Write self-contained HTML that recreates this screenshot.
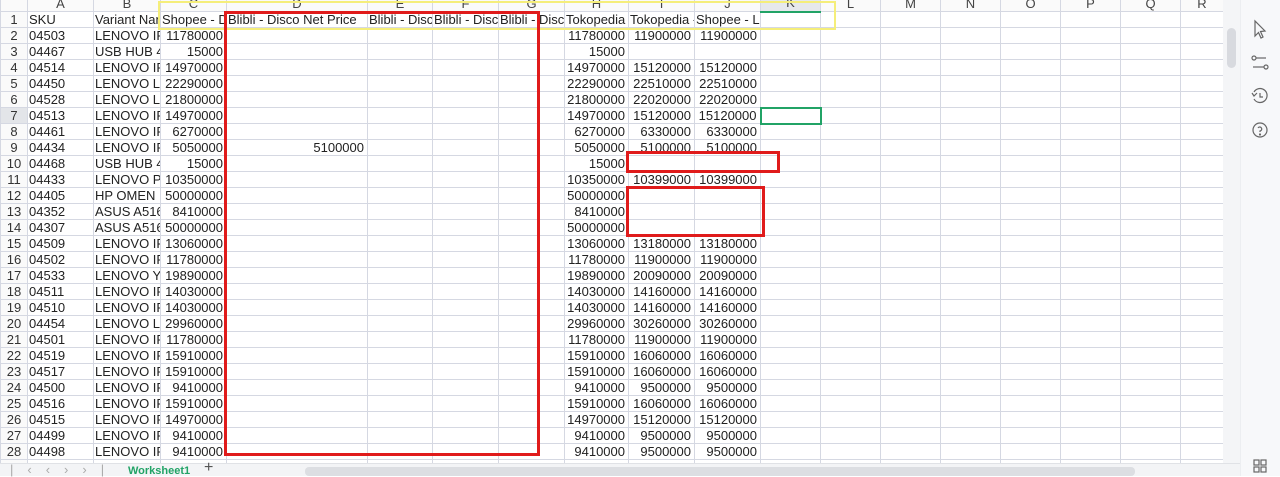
<!DOCTYPE html>
<html><head><meta charset="utf-8"><style>
*{margin:0;padding:0;box-sizing:border-box}
body{width:1280px;height:476px;overflow:hidden;background:#fff;font-family:"Liberation Sans",Arial,sans-serif;font-size:13px;color:#222;position:relative}
table{position:absolute;left:0;top:-5px;width:1223px;border-collapse:collapse;table-layout:fixed}
td{height:16px;border:1px solid #d5d8e2;white-space:nowrap;overflow:hidden;padding:0 1px;line-height:14px;font-size:13px}
td.n{text-align:right;padding-right:3px}
td.rh{text-align:center;color:#333;background:#fafafa}
tr.hd td{background:#fafafa;text-align:center;color:#444}
.box{position:absolute;border:3px solid #e01b1b}
</style></head><body>
<table>
<colgroup><col style="width:27px"><col style="width:66px"><col style="width:67px"><col style="width:66px"><col style="width:141px"><col style="width:65px"><col style="width:66px"><col style="width:66px"><col style="width:64px"><col style="width:66px"><col style="width:66px"><col style="width:60px"><col style="width:60px"><col style="width:60px"><col style="width:60px"><col style="width:60px"><col style="width:60px"><col style="width:60px"><col style="width:43px"></colgroup>
<tr class="hd"><td></td><td>A</td><td>B</td><td>C</td><td>D</td><td>E</td><td>F</td><td>G</td><td>H</td><td>I</td><td>J</td><td style="background:#e6e8ec;border-bottom:2px solid #21a366">K</td><td>L</td><td>M</td><td>N</td><td>O</td><td>P</td><td>Q</td><td>R</td></tr>
<tr><td class="rh">1</td><td>SKU</td><td>Variant Name</td><td>Shopee - Disc</td><td>Blibli - Disco Net Price</td><td>Blibli - Disc</td><td>Blibli - Disc</td><td>Blibli - Disc</td><td>Tokopedia - </td><td>Tokopedia - </td><td>Shopee - Lenovo Price</td><td></td><td></td><td></td><td></td><td></td><td></td><td></td><td></td></tr>
<tr><td class="rh">2</td><td>04503</td><td>LENOVO IF</td><td class="n">11780000</td><td></td><td></td><td></td><td></td><td class="n">11780000</td><td class="n">11900000</td><td class="n">11900000</td><td></td><td></td><td></td><td></td><td></td><td></td><td></td><td></td></tr>
<tr><td class="rh">3</td><td>04467</td><td>USB HUB 4</td><td class="n">15000</td><td></td><td></td><td></td><td></td><td class="n">15000</td><td></td><td></td><td></td><td></td><td></td><td></td><td></td><td></td><td></td><td></td></tr>
<tr><td class="rh">4</td><td>04514</td><td>LENOVO IF</td><td class="n">14970000</td><td></td><td></td><td></td><td></td><td class="n">14970000</td><td class="n">15120000</td><td class="n">15120000</td><td></td><td></td><td></td><td></td><td></td><td></td><td></td><td></td></tr>
<tr><td class="rh">5</td><td>04450</td><td>LENOVO LI</td><td class="n">22290000</td><td></td><td></td><td></td><td></td><td class="n">22290000</td><td class="n">22510000</td><td class="n">22510000</td><td></td><td></td><td></td><td></td><td></td><td></td><td></td><td></td></tr>
<tr><td class="rh">6</td><td>04528</td><td>LENOVO LI</td><td class="n">21800000</td><td></td><td></td><td></td><td></td><td class="n">21800000</td><td class="n">22020000</td><td class="n">22020000</td><td></td><td></td><td></td><td></td><td></td><td></td><td></td><td></td></tr>
<tr><td class="rh" style="background:#e3e5e9">7</td><td>04513</td><td>LENOVO IF</td><td class="n">14970000</td><td></td><td></td><td></td><td></td><td class="n">14970000</td><td class="n">15120000</td><td class="n">15120000</td><td style="border:2px solid #21a366"></td><td></td><td></td><td></td><td></td><td></td><td></td><td></td></tr>
<tr><td class="rh">8</td><td>04461</td><td>LENOVO IF</td><td class="n">6270000</td><td></td><td></td><td></td><td></td><td class="n">6270000</td><td class="n">6330000</td><td class="n">6330000</td><td></td><td></td><td></td><td></td><td></td><td></td><td></td><td></td></tr>
<tr><td class="rh">9</td><td>04434</td><td>LENOVO IF</td><td class="n">5050000</td><td class="n">5100000</td><td></td><td></td><td></td><td class="n">5050000</td><td class="n">5100000</td><td class="n">5100000</td><td></td><td></td><td></td><td></td><td></td><td></td><td></td><td></td></tr>
<tr><td class="rh">10</td><td>04468</td><td>USB HUB 4</td><td class="n">15000</td><td></td><td></td><td></td><td></td><td class="n">15000</td><td></td><td></td><td></td><td></td><td></td><td></td><td></td><td></td><td></td><td></td></tr>
<tr><td class="rh">11</td><td>04433</td><td>LENOVO P</td><td class="n">10350000</td><td></td><td></td><td></td><td></td><td class="n">10350000</td><td class="n">10399000</td><td class="n">10399000</td><td></td><td></td><td></td><td></td><td></td><td></td><td></td><td></td></tr>
<tr><td class="rh">12</td><td>04405</td><td>HP OMEN 1</td><td class="n">50000000</td><td></td><td></td><td></td><td></td><td class="n">50000000</td><td></td><td></td><td></td><td></td><td></td><td></td><td></td><td></td><td></td><td></td></tr>
<tr><td class="rh">13</td><td>04352</td><td>ASUS A516</td><td class="n">8410000</td><td></td><td></td><td></td><td></td><td class="n">8410000</td><td></td><td></td><td></td><td></td><td></td><td></td><td></td><td></td><td></td><td></td></tr>
<tr><td class="rh">14</td><td>04307</td><td>ASUS A516</td><td class="n">50000000</td><td></td><td></td><td></td><td></td><td class="n">50000000</td><td></td><td></td><td></td><td></td><td></td><td></td><td></td><td></td><td></td><td></td></tr>
<tr><td class="rh">15</td><td>04509</td><td>LENOVO IF</td><td class="n">13060000</td><td></td><td></td><td></td><td></td><td class="n">13060000</td><td class="n">13180000</td><td class="n">13180000</td><td></td><td></td><td></td><td></td><td></td><td></td><td></td><td></td></tr>
<tr><td class="rh">16</td><td>04502</td><td>LENOVO IF</td><td class="n">11780000</td><td></td><td></td><td></td><td></td><td class="n">11780000</td><td class="n">11900000</td><td class="n">11900000</td><td></td><td></td><td></td><td></td><td></td><td></td><td></td><td></td></tr>
<tr><td class="rh">17</td><td>04533</td><td>LENOVO Y</td><td class="n">19890000</td><td></td><td></td><td></td><td></td><td class="n">19890000</td><td class="n">20090000</td><td class="n">20090000</td><td></td><td></td><td></td><td></td><td></td><td></td><td></td><td></td></tr>
<tr><td class="rh">18</td><td>04511</td><td>LENOVO IF</td><td class="n">14030000</td><td></td><td></td><td></td><td></td><td class="n">14030000</td><td class="n">14160000</td><td class="n">14160000</td><td></td><td></td><td></td><td></td><td></td><td></td><td></td><td></td></tr>
<tr><td class="rh">19</td><td>04510</td><td>LENOVO IF</td><td class="n">14030000</td><td></td><td></td><td></td><td></td><td class="n">14030000</td><td class="n">14160000</td><td class="n">14160000</td><td></td><td></td><td></td><td></td><td></td><td></td><td></td><td></td></tr>
<tr><td class="rh">20</td><td>04454</td><td>LENOVO LI</td><td class="n">29960000</td><td></td><td></td><td></td><td></td><td class="n">29960000</td><td class="n">30260000</td><td class="n">30260000</td><td></td><td></td><td></td><td></td><td></td><td></td><td></td><td></td></tr>
<tr><td class="rh">21</td><td>04501</td><td>LENOVO IF</td><td class="n">11780000</td><td></td><td></td><td></td><td></td><td class="n">11780000</td><td class="n">11900000</td><td class="n">11900000</td><td></td><td></td><td></td><td></td><td></td><td></td><td></td><td></td></tr>
<tr><td class="rh">22</td><td>04519</td><td>LENOVO IF</td><td class="n">15910000</td><td></td><td></td><td></td><td></td><td class="n">15910000</td><td class="n">16060000</td><td class="n">16060000</td><td></td><td></td><td></td><td></td><td></td><td></td><td></td><td></td></tr>
<tr><td class="rh">23</td><td>04517</td><td>LENOVO IF</td><td class="n">15910000</td><td></td><td></td><td></td><td></td><td class="n">15910000</td><td class="n">16060000</td><td class="n">16060000</td><td></td><td></td><td></td><td></td><td></td><td></td><td></td><td></td></tr>
<tr><td class="rh">24</td><td>04500</td><td>LENOVO IF</td><td class="n">9410000</td><td></td><td></td><td></td><td></td><td class="n">9410000</td><td class="n">9500000</td><td class="n">9500000</td><td></td><td></td><td></td><td></td><td></td><td></td><td></td><td></td></tr>
<tr><td class="rh">25</td><td>04516</td><td>LENOVO IF</td><td class="n">15910000</td><td></td><td></td><td></td><td></td><td class="n">15910000</td><td class="n">16060000</td><td class="n">16060000</td><td></td><td></td><td></td><td></td><td></td><td></td><td></td><td></td></tr>
<tr><td class="rh">26</td><td>04515</td><td>LENOVO IF</td><td class="n">14970000</td><td></td><td></td><td></td><td></td><td class="n">14970000</td><td class="n">15120000</td><td class="n">15120000</td><td></td><td></td><td></td><td></td><td></td><td></td><td></td><td></td></tr>
<tr><td class="rh">27</td><td>04499</td><td>LENOVO IF</td><td class="n">9410000</td><td></td><td></td><td></td><td></td><td class="n">9410000</td><td class="n">9500000</td><td class="n">9500000</td><td></td><td></td><td></td><td></td><td></td><td></td><td></td><td></td></tr>
<tr><td class="rh">28</td><td>04498</td><td>LENOVO IF</td><td class="n">9410000</td><td></td><td></td><td></td><td></td><td class="n">9410000</td><td class="n">9500000</td><td class="n">9500000</td><td></td><td></td><td></td><td></td><td></td><td></td><td></td><td></td></tr>
<tr><td class="rh">29</td><td>03380</td><td>Lenovo Logi</td><td>M300 Gaming M</td><td></td><td></td><td></td><td></td><td class="n">150000</td><td class="n">150000</td><td class="n">150000</td><td></td><td></td><td></td><td></td><td></td><td></td><td></td><td></td></tr>
</table>
<div style="position:absolute;left:158px;top:1px;width:678px;height:29px;border:2px solid #f5ee7a"></div>
<div class="box" style="left:224px;top:11px;width:316px;height:445px"></div>
<div class="box" style="left:626px;top:151px;width:154px;height:22px"></div>
<div class="box" style="left:626px;top:186px;width:139px;height:51px"></div>
<div style="position:absolute;left:1223px;top:0;width:17px;height:463px;background:#f4f5f7"></div>
<div style="position:absolute;left:1227px;top:28px;width:9px;height:40px;background:#d8dadf;border-radius:5px"></div>
<div style="position:absolute;left:1240px;top:0;width:40px;height:476px;background:#f7f8fa;border-left:1px solid #eceef1"></div>
<svg style="position:absolute;left:1240px;top:0" width="40" height="476" viewBox="0 0 40 476" fill="none" stroke="#666" stroke-width="1.2">
<path d="M15 21 L15 36 L18.5 32.5 L21 38 L23 37 L20.5 31.5 L25 31 Z"/>
<circle cx="14" cy="58" r="2"/><path d="M16 58 H26"/><circle cx="26" cy="67" r="2"/><path d="M13 67 H24"/>
<path d="M14 92 A7 7 0 1 1 14 99"/><path d="M12 93 L14 96 L17 93"/><path d="M20 93 V97 H23"/>
<circle cx="20" cy="130" r="7"/><path d="M18 128 A2 2 0 1 1 20 131 V132"/><circle cx="20" cy="134.5" r="0.5"/>
<rect x="14" y="460" width="5" height="5"/><rect x="21" y="460" width="5" height="5"/><rect x="14" y="467" width="5" height="5"/><rect x="21" y="467" width="5" height="5"/>
</svg>
<div style="position:absolute;left:0;top:463px;width:1240px;height:13px;background:#f3f4f6;border-top:1px solid #e0e2e6"></div>
<div style="position:absolute;left:10px;top:462px;font-size:13px;color:#aaa;letter-spacing:14px">|‹‹››|</div>
<div style="position:absolute;left:128px;top:465px;font-size:11px;font-weight:bold;color:#21a366">Worksheet1</div>
<div style="position:absolute;left:204px;top:459px;font-size:16px;color:#555">+</div>
<div style="position:absolute;left:305px;top:467px;width:830px;height:9px;background:#dcdee2;border-radius:4px"></div>
</body></html>
